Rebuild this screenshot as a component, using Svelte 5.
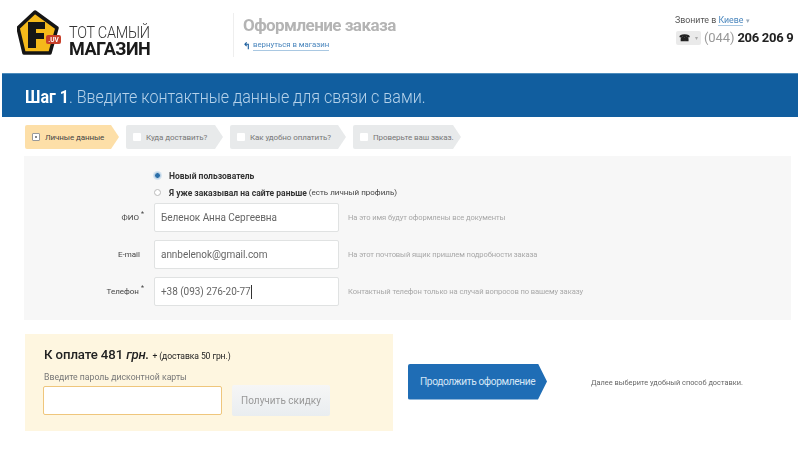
<script>
	let steps = [
		{ label: 'Личные данные', w: 94, active: true },
		{ label: 'Куда доставить?', w: 97 },
		{ label: 'Как удобно оплатить?', w: 116 },
		{ label: 'Проверьте ваш заказ.', w: 108 }
	];
	let fields = [
		{ label: 'ФИО', req: true, value: 'Беленок Анна Сергеевна', hint: 'На это имя будут оформлены все документы' },
		{ label: 'E-mail', req: false, value: 'annbelenok@gmail.com', hint: 'На этот почтовый ящик пришлем подробности заказа' },
		{ label: 'Телефон', req: true, value: '+38 (093) 276-20-77', hint: 'Контактный телефон только на случай вопросов по вашему заказу', caret: true }
	];
</script>

<div class="page">
	<header class="top">
		<div class="logo">
			<svg width="46" height="48" viewBox="0 0 46 48">
				<path d="M18 2 L40 18 L33 43 L7 43 L1 18 Z" fill="#f5b91a" stroke="#151515" stroke-width="3.5" stroke-linejoin="round" />
				<path d="M11 12 H28 V19 H19 V23 H27 V29 H19 V38 H11 Z" fill="#151515" />
				<rect x="29" y="25" width="15" height="9" rx="2" fill="#c8402a" />
				<text x="36.5" y="32" class="uv">.UV</text>
			</svg>
			<div class="logo-text">
				<span class="l1">ТОТ САМЫЙ</span>
				<span class="l2">МАГАЗИН</span>
			</div>
		</div>
		<div class="title">
			<h1>Оформление заказа</h1>
			<div class="back"><span class="arr">↰</span><a href="#back">вернуться в магазин</a></div>
		</div>
		<div class="phone">
			<div class="city">Звоните в <a href="#city">Киеве</a> <i>▾</i></div>
			<div class="num">
				<span class="tel"><b>☎</b><i>▾</i></span>
				<span class="code">(044)</span>
				<strong>206 206 9</strong>
			</div>
		</div>
	</header>

	<div class="banner"><span class="banner-text"><b>Шаг 1</b>. Введите контактные данные для связи с вами.</span></div>

	<div class="steps">
		{#each steps as s}
			<div class="step" class:active={s.active} style="width:{s.w}px">
				<span class="box" class:on={s.active}></span>
				<span>{s.label}</span>
			</div>
		{/each}
	</div>

	<section class="form">
		<div class="radios">
			<label><span class="radio on"></span><b>Новый пользователь</b></label>
			<label><span class="radio"></span><b>Я уже заказывал на сайте раньше</b>&nbsp;<span class="extra">(есть личный профиль)</span></label>
		</div>
		<div class="rows">
			{#each fields as f}
				<div class="row">
					<div class="lab">{f.label}{#if f.req}<sup>*</sup>{/if}</div>
					<div class="input">{f.value}{#if f.caret}<span class="caret"></span>{/if}</div>
					<div class="hint">{f.hint}</div>
				</div>
			{/each}
		</div>
	</section>

	<div class="bottom">
		<section class="pay">
			<div class="sum">К оплате 481 <em>грн.</em> <small>+ (доставка 50 грн.)</small></div>
			<div class="cap">Введите пароль дисконтной карты</div>
			<div class="disc">
				<div class="card-input"></div>
				<div class="get">Получить скидку</div>
			</div>
		</section>
		<div class="next">Продолжить оформление</div>
		<div class="note">Далее выберите удобный способ доставки.</div>
	</div>
</div>

<style>
	:global(body) {
		margin: 0;
		background: #fff;
	}
	.page {
		width: 800px;
		height: 456px;
		overflow: hidden;
		font-family: Roboto, 'Liberation Sans', sans-serif;
		color: #333;
		filter: blur(0.4px);
	}
	.top {
		display: flex;
		height: 73px;
		box-sizing: border-box;
		padding: 10px 0 0 17px;
	}
	.logo {
		display: flex;
		flex: none;
		width: 216px;
		gap: 6px;
		align-items: flex-start;
	}
	.uv {
		font: bold 6.5px Roboto, sans-serif;
		fill: #fff;
		text-anchor: middle;
	}
	.logo-text {
		display: flex;
		flex-direction: column;
		margin-top: 15px;
		color: #1a1a1a;
		white-space: nowrap;
	}
	.l1 {
		font-size: 17px;
		line-height: 15px;
		font-weight: 300;
		letter-spacing: -0.3px;
		color: #333;
		transform: scaleX(0.85);
		transform-origin: left center;
	}
	.l2 {
		font-size: 18px;
		line-height: 17px;
		font-weight: 700;
		letter-spacing: -0.5px;
	}
	.title {
		flex: none;
		width: 442px;
		height: 44px;
		margin-top: 3px;
		padding-left: 9px;
		box-sizing: border-box;
		border-left: 1px solid #eee;
	}
	h1 {
		margin: 1px 0 4px;
		font-size: 17px;
		line-height: 22px;
		font-weight: 700;
		letter-spacing: -0.55px;
		color: #b4b4b4;
	}
	.back {
		font-size: 7.8px;
		display: flex;
		gap: 2px;
		align-items: center;
	}
	.arr {
		color: #1c5f9f;
		font-weight: 700;
		font-size: 9px;
	}
	a {
		color: #4a86bd;
		text-decoration: none;
		border-bottom: 1px solid #a9c8e2;
		line-height: 10px;
	}
	.phone {
		flex: none;
		margin-top: 4px;
		white-space: nowrap;
	}
	.city {
		font-size: 8.8px;
		color: #555;
		line-height: 12px;
	}
	.city i {
		color: #9ab;
		font-style: normal;
		font-size: 7px;
	}
	.num {
		display: flex;
		align-items: center;
		gap: 3px;
		margin: 3px 0 0 1px;
	}
	.tel {
		display: flex;
		align-items: center;
		justify-content: space-between;
		box-sizing: border-box;
		width: 25px;
		height: 14px;
		padding: 0 3px;
		border-radius: 2px;
		background: #eaeaea;
		font-size: 9px;
		color: #222;
	}
	.tel i {
		font-style: normal;
		font-size: 6px;
		color: #aaa;
	}
	.code {
		font-size: 13px;
		letter-spacing: -0.1px;
		color: #999;
	}
	.num strong {
		font-size: 13px;
		letter-spacing: -0.3px;
		color: #222;
	}
	.banner {
		margin: 0 2px;
		height: 44px;
		box-sizing: border-box;
		padding-left: 23px;
		background: #115e9f;
		border-top: 1px solid #4d8cbc;
		color: #b5d2ea;
		font-size: 18.6px;
		font-weight: 300;
		line-height: 47px;
		white-space: nowrap;
	}
	.banner-text {
		display: inline-block;
		transform: scaleX(0.864);
		transform-origin: left center;
	}
	.banner b {
		color: #fff;
		font-weight: 700;
	}
	.steps {
		display: flex;
		margin: 8px 0 0 25px;
		gap: 7px;
	}
	.step {
		display: flex;
		align-items: center;
		gap: 5px;
		box-sizing: border-box;
		height: 24px;
		padding-left: 7px;
		background: #e8eaeb;
		color: #777;
		font-size: 8px;
		letter-spacing: -0.1px;
		white-space: nowrap;
		clip-path: polygon(0 0, calc(100% - 8px) 0, 100% 50%, calc(100% - 8px) 100%, 0 100%);
		border-radius: 2px 0 0 2px;
	}
	.step.active {
		background: #fddfa8;
		color: #444;
	}
	.box {
		width: 8px;
		height: 8px;
		background: #fff;
		border-radius: 1px;
		position: relative;
	}
	.box.on {
		box-sizing: border-box;
		border: 1px solid #999;
	}
	.box.on::after {
		content: '';
		position: absolute;
		inset: 2px;
		background: #888;
	}
	.form {
		margin: 7px 9px 0 24px;
		height: 164px;
		box-sizing: border-box;
		padding-top: 11px;
		background: #f7f7f7;
	}
	.radios {
		margin-left: 130px;
		font-size: 8px;
		color: #444;
		white-space: nowrap;
	}
	.radios label {
		display: flex;
		align-items: center;
		height: 17px;
	}
	.radios b {
		font-size: 8.5px;
		color: #333;
	}
	.radio {
		box-sizing: border-box;
		width: 7px;
		height: 7px;
		margin-right: 8px;
		border-radius: 50%;
		border: 1px solid #bbb;
		background: #fff;
	}
	.radio.on {
		border: 1px solid #cfe0ee;
		background: #2a6ea8;
		box-shadow: 0 0 0 1px #d6e4f0;
	}
	.rows {
		display: flex;
		flex-direction: column;
		gap: 8px;
		margin-top: 2px;
	}
	.row {
		display: flex;
		align-items: center;
	}
	.lab {
		width: 120px;
		box-sizing: border-box;
		text-align: right;
		font-size: 8px;
		color: #444;
	}
	.lab sup {
		font-size: 7px;
		line-height: 0;
		margin-left: 2px;
	}
	.row:nth-child(2) .lab {
		padding-right: 4px;
	}
	.input {
		display: flex;
		align-items: center;
		box-sizing: border-box;
		width: 185px;
		height: 29px;
		margin-left: 10px;
		padding-left: 6px;
		background: #fff;
		border: 1px solid #e0e2e2;
		border-radius: 2px;
		font-size: 10px;
		letter-spacing: -0.05px;
		color: #666;
	}
	.caret {
		width: 1px;
		height: 14px;
		background: #333;
	}
	.hint {
		margin-left: 9px;
		font-size: 7.6px;
		letter-spacing: -0.1px;
		color: #a8a8a8;
		white-space: nowrap;
	}
	.bottom {
		display: flex;
		align-items: center;
		margin: 14px 0 0 25px;
	}
	.pay {
		flex: none;
		box-sizing: border-box;
		width: 368px;
		height: 97px;
		padding: 13px 0 0 18px;
		background: #fef6e0;
	}
	.sum {
		font-size: 13.2px;
		font-weight: 500;
		letter-spacing: -0.1px;
		color: #222;
		line-height: 16px;
		margin-left: 1px;
	}
	.sum em {
		font-style: italic;
		font-weight: 500;
	}
	.sum small {
		font-size: 8.6px;
		font-weight: 400;
	}
	.cap {
		margin: 8px 0 0 1px;
		font-size: 8.7px;
		color: #777;
		line-height: 11px;
	}
	.disc {
		display: flex;
		align-items: center;
		gap: 10px;
		margin-top: 2px;
	}
	.card-input {
		box-sizing: border-box;
		width: 179px;
		height: 29px;
		background: #fff;
		border: 1px solid #efc67c;
		border-radius: 2px;
	}
	.get {
		display: flex;
		align-items: center;
		justify-content: center;
		width: 98px;
		height: 31px;
		border-radius: 2px;
		background: linear-gradient(#f6f6f6, #e9edf0);
		color: #999;
		font-size: 10px;
		white-space: nowrap;
	}
	.next {
		display: flex;
		flex: none;
		align-items: center;
		box-sizing: border-box;
		width: 139px;
		height: 36px;
		margin: 0 0 2px 15px;
		padding-left: 12px;
		background: #1f6db5;
		color: #d5e6f5;
		font-size: 10.2px;
		letter-spacing: -0.4px;
		white-space: nowrap;
		border-radius: 2px 0 0 2px;
		clip-path: polygon(0 0, calc(100% - 9px) 0, 100% 50%, calc(100% - 9px) 100%, 0 100%);
	}
	.note {
		margin: 0 0 0 44px;
		font-size: 7.4px;
		color: #666;
		white-space: nowrap;
	}
</style>
